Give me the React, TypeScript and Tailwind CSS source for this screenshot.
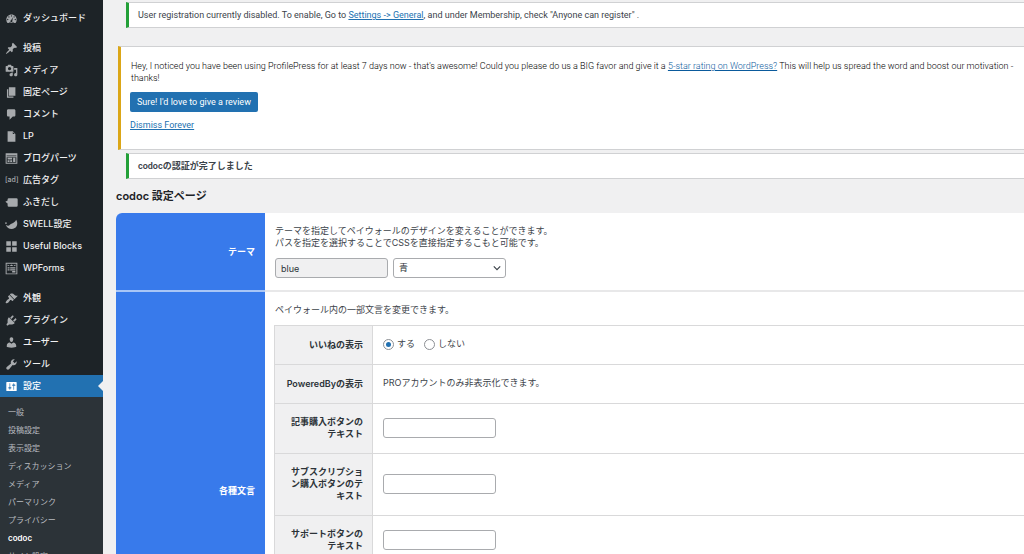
import type { ReactNode } from "react";

type NavItem = { label: string; icon: ReactNode; active?: boolean };

const Icon = ({ children }: { children: ReactNode }) => (
  <svg viewBox="0 0 20 20" className="size-[13px] shrink-0" fill="currentColor" fillRule="evenodd" aria-hidden="true">
    {children}
  </svg>
);

const dashboard: NavItem[] = [
  {
    label: "ダッシュボード",
    icon: (
      <Icon>
        <path d="M3.76 17h12.48A7.93 7.93 0 0 0 18 12c0-4.41-3.58-8-8-8s-8 3.59-8 8c0 1.9.66 3.64 1.76 5zM10 5a1 1 0 1 1 0 2 1 1 0 0 1 0-2zM6 6.5a1 1 0 1 1 0 2 1 1 0 0 1 0-2zM14 6.5a1 1 0 1 1 0 2 1 1 0 0 1 0-2zM4.2 10.5a1 1 0 1 1 0 2 1 1 0 0 1 0-2zM15.8 10.5a1 1 0 1 1 0 2 1 1 0 0 1 0-2zM12.3 8.2l-1 5.4a1.6 1.6 0 1 1-2-.9zM6 15.5h8v.7H6z" />
      </Icon>
    ),
  },
];

const content: NavItem[] = [
  {
    label: "投稿",
    icon: (
      <Icon>
        <path d="M10.44 3.02l1.82-1.82 6.36 6.35-1.83 1.82c-1.05-.68-2.48-.57-3.41.36l-.75.75c-.92.93-1.04 2.35-.35 3.41l-1.83 1.82-2.41-2.41-2.8 2.79c-.42.42-3.38 2.71-3.8 2.29s1.86-3.39 2.28-3.81l2.79-2.79L4.1 9.36l1.83-1.82c1.05.69 2.48.57 3.4-.36l.75-.75c.93-.92 1.05-2.35.36-3.41z" />
      </Icon>
    ),
  },
  {
    label: "メディア",
    icon: (
      <Icon>
        <path d="M13 11V4c0-.55-.45-1-1-1h-1.67L9 1H5L3.67 3H2c-.55 0-1 .45-1 1v7c0 .55.45 1 1 1h10c.55 0 1-.45 1-1zM7 4.5c1.38 0 2.5 1.12 2.5 2.5S8.38 9.5 7 9.5 4.5 8.38 4.5 7 5.62 4.5 7 4.5zM14 6h5v10.5c0 1.38-1.12 2.5-2.5 2.5S14 17.88 14 16.5s1.12-2.5 2.5-2.5c.17 0 .34.02.5.05V9h-3V6zm-4 8.05V13h2v3.5c0 1.38-1.12 2.5-2.5 2.5S7 17.88 7 16.5 8.12 14 9.5 14c.17 0 .34.02.5.05z" />
      </Icon>
    ),
  },
  {
    label: "固定ページ",
    icon: (
      <Icon>
        <path d="M6 15V2h10v13H6zm-1 1h8v2H3V5h2v11z" />
      </Icon>
    ),
  },
  {
    label: "コメント",
    icon: (
      <Icon>
        <path d="M5 2h9c1.1 0 2 .9 2 2v7c0 1.1-.9 2-2 2h-2l-5 5v-5H5c-1.1 0-2-.9-2-2V4c0-1.1.9-2 2-2z" />
      </Icon>
    ),
  },
  {
    label: "LP",
    icon: (
      <Icon>
        <path d="M12 2l4 4v12H4V2h8zm0 4h3l-3-3v3z" />
      </Icon>
    ),
  },
  {
    label: "ブログパーツ",
    icon: (
      <Icon>
        <path d="M1 2h18v16H1zM2.5 5.5v1h15v-1zM2.5 8v8.500h15V8zM4 9h7v2.500H4zM4 12.500h3V15.500H4zM8 12.500h3V15.500H8zM12.500 9H16v6.500h-3.500z" />
      </Icon>
    ),
  },
  { label: "広告タグ", icon: <span className="w-[13px] shrink-0 text-[7px] font-medium">[ad]</span> },
  {
    label: "ふきだし",
    icon: (
      <Icon>
        <path d="M6 3.500h11.500a2 2 0 0 1 2 2v9a2 2 0 0 1-2 2H6a2 2 0 0 1-2-2v-3L.5 9 4 7V5.500a2 2 0 0 1 2-2z" />
      </Icon>
    ),
  },
  {
    label: "SWELL設定",
    icon: (
      <Icon>
        <path d="M17 2.500c3 4.500 2.500 10-2 13C10.500 18.500 3.500 17 1 10.500c2.500 1.800 5 2 6.500 0C9.500 8 12 8.500 14 6.500c1.500-1.300 2.600-2.300 3-4zM1.500 6.500a1.300 1.300 0 1 1 0 2.600 1.300 1.300 0 0 1 0-2.600z" />
      </Icon>
    ),
  },
  {
    label: "Useful Blocks",
    icon: (
      <Icon>
        <path d="M2 2h7v7H2zM11 2h7v7h-7zM2 11h7v7H2zM11 11h7v7h-7z" />
      </Icon>
    ),
  },
  {
    label: "WPForms",
    icon: (
      <Icon>
        <path d="M1 1h18v18H1zM2.500 2.500v15h15v-15zM4 4l3 2 3-2 3 2 3-2v2H4zM4 8h3v2H4zM8 8h8v2H8zM4 11h3v2H4zM8 11h8v2H8zM11 14h5v2h-5z" />
      </Icon>
    ),
  },
];

const admin: NavItem[] = [
  {
    label: "外観",
    icon: (
      <Icon>
        <path d="M14.48 11.06L7.41 3.99l1.500-1.500c.5-.56 2.300-.47 3.510.32 1.210.8 1.430 1.280 2.910 2.100 1.180.64 2.450 1.260 4.450.85zm-.71.71L6.700 4.700 4.930 6.470c-.39.39-.39 1.020 0 1.410l1.060 1.060c.39.39.39 1.030 0 1.420-.6.6-1.430 1.110-2.210 1.690-.35.26-.7.53-1.010.84C1.430 14.230.4 16.080 1.400 17.070c.99 1 2.840-.03 4.180-1.360.31-.31.58-.66.85-1.020.57-.78 1.080-1.610 1.690-2.210.39-.39 1.020-.39 1.410 0l1.060 1.060c.39.39 1.020.39 1.410 0z" />
      </Icon>
    ),
  },
  {
    label: "プラグイン",
    icon: (
      <Icon>
        <path d="M13.11 4.36L9.87 7.6 8 5.73l3.24-3.24c.35-.34 1.05-.2 1.56.32.52.51.66 1.21.31 1.55zm-8 1.77l.91-1.12 9.01 9.01-1.19.84c-.71.71-2.63 1.16-3.82 1.16H6.14L4.9 17.26c-.59.59-1.54.59-2.12 0-.59-.58-.59-1.53 0-2.12l1.24-1.24v-3.88c0-1.13.4-3.19 1.09-3.89zm7.26 3.97l3.24-3.24c.34-.35 1.04-.21 1.55.31.52.51.66 1.21.31 1.55l-3.24 3.25z" />
      </Icon>
    ),
  },
  {
    label: "ユーザー",
    icon: (
      <Icon>
        <path d="M10 9.25c-2.27 0-2.73-3.44-2.73-3.44C7 4.02 7.82 2 9.97 2c2.16 0 2.98 2.02 2.71 3.81 0 0-.41 3.44-2.68 3.44zm0 2.57L12.72 10c2.39 0 4.52 2.33 4.52 4.53v2.49s-3.65 1.13-7.24 1.13c-3.65 0-7.24-1.13-7.24-1.13v-2.49c0-2.25 1.94-4.48 4.47-4.48z" />
      </Icon>
    ),
  },
  {
    label: "ツール",
    icon: (
      <Icon>
        <path d="M16.68 9.77c-1.34 1.34-3.3 1.67-4.95.99l-5.41 6.52c-.99.99-2.59.99-3.58 0s-.99-2.59 0-3.57l6.52-5.42c-.68-1.65-.35-3.61.99-4.95 1.28-1.28 3.12-1.62 4.72-1.06l-2.89 2.89 2.82 2.82 2.86-2.87c.53 1.58.18 3.39-1.08 4.65z" />
      </Icon>
    ),
  },
  {
    label: "設定",
    active: true,
    icon: (
      <Icon>
        <path d="M18 16V4c0-.55-.45-1-1-1H3c-.55 0-1 .45-1 1v12c0 .55.45 1 1 1h14c.55 0 1-.45 1-1zM8 11h1c.55 0 1 .45 1 1s-.45 1-1 1H8v1.5c0 .28-.22.5-.5.5s-.5-.22-.5-.5V13H6c-.55 0-1-.45-1-1s.45-1 1-1h1V5.5c0-.28.22-.5.5-.5s.5.22.5.5V11zm5-2h-1c-.55 0-1-.45-1-1s.45-1 1-1h1V5.5c0-.28.22-.5.5-.5s.5.22.5.5V7h1c.55 0 1 .45 1 1s-.45 1-1 1h-1v5.5c0 .28-.22.5-.5.5s-.5-.22-.5-.5V9z" />
      </Icon>
    ),
  },
];

const settingsPages = ["一般", "投稿設定", "表示設定", "ディスカッション", "メディア", "パーマリンク", "プライバシー", "codoc", "サイト設定"];

const NavGroup = ({ items }: { items: NavItem[] }) => (
  <ul>
    {items.map(({ label, icon, active }) => (
      <li key={label}>
        <a
          href="#"
          className={`relative flex h-[22px] items-center gap-[5px] pl-[5px] text-[9px] font-medium whitespace-nowrap ${
            active ? "bg-[#2271b1] text-white" : "text-[#f0f0f1]"
          }`}
        >
          <span className={`flex ${active ? "text-white" : "text-[#a7aaad]"}`}>{icon}</span>
          {label}
          {active && (
            <span className="absolute top-1/2 right-0 -translate-y-1/2 border-y-[5px] border-r-[5px] border-y-transparent border-r-[#f0f0f1]" />
          )}
        </a>
      </li>
    ))}
  </ul>
);

const Sidebar = () => (
  <nav className="flex w-[103px] shrink-0 flex-col gap-2 bg-[#1d2327] pt-[7px]">
    <NavGroup items={dashboard} />
    <NavGroup items={content} />
    <div className="flex grow flex-col">
      <NavGroup items={admin} />
      <ul className="grow bg-[#2c3338] pt-[6px]">
        {settingsPages.map((page) => (
          <li key={page}>
            <a
              href="#"
              className={`flex h-[18px] items-center pl-2 text-[8px] whitespace-nowrap ${
                page === "codoc" ? "font-semibold text-white" : "text-[#b9bcc0]"
              }`}
            >
              {page}
            </a>
          </li>
        ))}
      </ul>
    </div>
  </nav>
);

const Notice = ({ children }: { children: ReactNode }) => (
  <div className="ml-[10px] border border-r-0 border-l-[3px] border-[#d0d1d3] border-l-[#23a038] bg-white px-[9px] py-[6px]">
    {children}
  </div>
);

const inputClass = "h-5 w-[113px] rounded-[3px] border border-[#a9abae] px-[5px] text-[9px] text-[#2c3338]";

const radioClass =
  "size-[11px] appearance-none rounded-full border border-[#8c8f94] bg-white bg-clip-content p-[2px] checked:bg-[#2271b1]";

const textFields = [
  { id: "entry", label: "記事購入ボタンのテキスト" },
  { id: "subscription", label: "サブスクリプション購入ボタンのテキスト" },
  { id: "support", label: "サポートボタンのテキスト" },
];

const WordingRow = ({ label, htmlFor, children }: { label: string; htmlFor?: string; children: ReactNode }) => (
  <tr className="border-t border-[#d9d9da]">
    <th scope="row" className="w-[98px] border-x border-[#d9d9da] bg-[#f0f0f1] px-[9px] pt-3 pb-[13px] text-right font-semibold text-[#2c3338]">
      {htmlFor ? <label htmlFor={htmlFor}>{label}</label> : label}
    </th>
    <td className="px-[10px] pt-3 pb-[14px]">{children}</td>
  </tr>
);

export default function App() {
  return (
    <div className="flex h-screen overflow-hidden bg-[#f0f0f1] font-[Inter,'Noto_Sans_CJK_JP',sans-serif] text-[9px] leading-3 text-[#3c434a]">
      <Sidebar />
      <main className="min-w-0 grow pt-[2px] pl-[13px]">
        <div className="font-[Roboto,'Noto_Sans_CJK_JP',sans-serif]">
          <Notice>
            User registration currently disabled. To enable, Go to{" "}
            <a href="#" className="text-[#2271b1] underline">
              Settings -&gt; General
            </a>
            , and under Membership, check "Anyone can register" .
          </Notice>

          <div className="mt-[18px] ml-[2px] border border-r-0 border-l-[3px] border-[#d0d1d3] border-l-[#dba617] bg-white pt-[13px] pr-[5px] pb-[18px] pl-[9px]">
            <p className="pl-px font-light text-black">
              Hey, I noticed you have been using ProfilePress for at least 7 days now - that's awesome! Could you please do us a BIG favor and
              give it a{" "}
              <a href="#" className="text-[#0a5a9c] underline">
                5-star rating on WordPress?
              </a>{" "}
              This will help us spread the word and boost our motivation - thanks!
            </p>
            <button type="button" className="mt-2 block h-5 rounded-[2px] bg-[#2271b1] px-[7px] text-white">
              Sure! I'd love to give a review
            </button>
            <a href="#" className="mt-[7px] inline-block text-[#2271b1] underline">
              Dismiss Forever
            </a>
          </div>

          <div className="mt-[3px]">
            <Notice>
              <strong className="font-semibold">codocの認証が完了しました</strong>
            </Notice>
          </div>
        </div>

        <h1 className="my-[9px] text-[11px] leading-4 font-semibold text-[#1d2327]">codoc 設定ページ</h1>

        <table className="w-full border-separate border-spacing-0 overflow-hidden rounded-tl-[6px] bg-white text-left">
          <tbody>
            <tr>
              <th scope="row" className="w-[149px] border-b-2 border-[#a9c6f6] bg-[#387aeb] px-[10px] text-right font-semibold text-white">
                テーマ
              </th>
              <td className="border-b-2 border-[#e8e8e9] px-[10px] pt-3 pb-[12px]">
                <p>
                  テーマを指定してペイウォールのデザインを変えることができます。
                  <br />
                  パスを指定を選択することでCSSを直接指定するこもと可能です。
                </p>
                <div className="mt-[9px] flex gap-[5px]">
                  <input aria-label="テーマのパス" readOnly defaultValue="blue" className={`${inputClass} bg-[#f0f0f1]`} />
                  <div className="relative">
                    <select aria-label="テーマ" className={`${inputClass} block appearance-none bg-white`}>
                      <option>青</option>
                    </select>
                    <svg viewBox="0 0 10 10" className="pointer-events-none absolute top-[6px] right-[5px] size-2" fill="none" stroke="#3c434a" strokeWidth="1.500">
                      <path d="M1 3l4 4 4-4" />
                    </svg>
                  </div>
                </div>
              </td>
            </tr>
            <tr>
              <th scope="row" className="bg-[#387aeb] px-[10px] text-right font-semibold text-white">
                各種文言
              </th>
              <td className="pt-3 pb-[123px] pl-[9px]">
                <p className="pl-px">ペイウォール内の一部文言を変更できます。</p>
                <table className="mt-[9px] w-full border-collapse border-b border-[#d9d9da]">
                  <tbody>
                    <WordingRow label="いいねの表示">
                      <div className="flex gap-[9px]">
                        <label className="flex items-center gap-[3px]">
                          <input type="radio" name="like" defaultChecked className={radioClass} />
                          する
                        </label>
                        <label className="flex items-center gap-[3px]">
                          <input type="radio" name="like" className={radioClass} />
                          しない
                        </label>
                      </div>
                    </WordingRow>
                    <WordingRow label="PoweredByの表示">PROアカウントのみ非表示化できます。</WordingRow>
                    {textFields.map(({ id, label }) => (
                      <WordingRow key={id} label={label} htmlFor={id}>
                        <input id={id} type="text" className={`${inputClass} block bg-white`} />
                      </WordingRow>
                    ))}
                  </tbody>
                </table>
              </td>
            </tr>
          </tbody>
        </table>
      </main>
    </div>
  );
}
